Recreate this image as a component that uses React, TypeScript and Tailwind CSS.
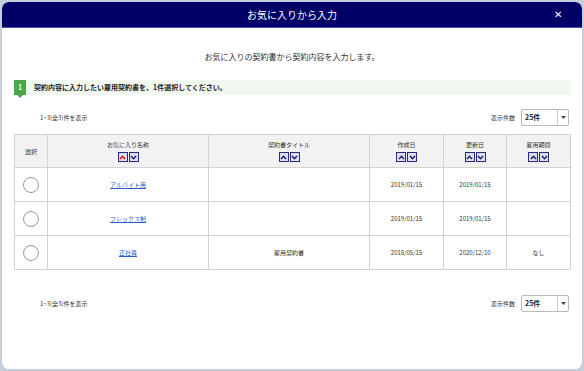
import React from "react";

const font = { fontFamily: '"Noto Sans CJK JP", "Noto Sans", sans-serif' };

function SortBtns({ upActive = false }: { upActive?: boolean }) {
  return (
    <div className="flex justify-center gap-[1px] mt-[3px]">
      <span className="w-[10px] h-[10px] border border-[#2a2a80] bg-[#dcdcf2] flex items-center justify-center">
        <svg width="7" height="5" viewBox="0 0 7 5">
          <path d="M1 4 L3.5 1.3 L6 4" fill="none" stroke={upActive ? "#e00000" : "#1a1a70"} strokeWidth="1.4" />
        </svg>
      </span>
      <span className="w-[10px] h-[10px] border border-[#2a2a80] bg-[#dcdcf2] flex items-center justify-center">
        <svg width="7" height="5" viewBox="0 0 7 5">
          <path d="M1 1 L3.5 3.7 L6 1" fill="none" stroke="#1a1a70" strokeWidth="1.4" />
        </svg>
      </span>
    </div>
  );
}

function Pager() {
  return (
    <div className="flex items-center justify-between">
      <div className="pl-[26px] text-[6px] text-[#333]">1~3(全3)件を表示</div>
      <div className="flex items-center gap-[6px] pr-[1px]">
        <span className="text-[6px] text-[#333]">表示件数</span>
        <div className="w-[48px] h-[17px] border border-[#bbb] rounded-[2px] bg-white flex">
          <div className="flex-1 flex items-center pl-[3px] text-[7px] text-[#222] font-bold">25件</div>
          <div className="w-[11px] border-l border-[#ccc] flex items-center justify-center">
            <svg width="5" height="3" viewBox="0 0 5 3"><path d="M0 0 L5 0 L2.5 3 Z" fill="#444" /></svg>
          </div>
        </div>
      </div>
    </div>
  );
}

const rows = [
  { name: "アルバイト用", title: "", created: "2019/01/15", updated: "2019/01/15", period: "" },
  { name: "フレックス制", title: "", created: "2019/01/15", updated: "2019/01/15", period: "" },
  { name: "正社員", title: "雇用契約書", created: "2018/05/15", updated: "2020/12/10", period: "なし" },
];

export default function App() {
  const th = "border border-[#d2d2d2] bg-[#f2f2f2] text-[6px] font-normal text-[#333] align-middle";
  const td = "border border-[#d2d2d2] text-[6px] text-[#333] text-center align-middle";
  return (
    <div className="w-[584px] h-[371px] bg-[#c6cedc] p-[2px]" style={font}>
      <div className="w-[580px] h-[367px] bg-white rounded-[7px] overflow-hidden flex flex-col">
        <div className="h-[26px] bg-[#000066] border-b border-[#4a4ab0] flex items-center justify-center relative shrink-0">
          <span className="text-white text-[10px]">お気に入りから入力</span>
          <span className="absolute right-[20px] top-[7px] text-white text-[10px] leading-none">✕</span>
        </div>
        <div className="flex-1 px-[12px]">
          <div className="text-center text-[8px] text-[#333] mt-[23px]">お気に入りの契約書から契約内容を入力します。</div>
          <div className="mt-[17px] h-[15px] bg-[#f1f8ef] flex items-center">
            <div className="relative w-[12px] h-[15px] bg-[#4aa84a] text-white text-[7px] font-bold flex items-center justify-center">
              1
              <span className="absolute left-[3px] bottom-[-3px] w-0 h-0 border-l-[3px] border-r-[3px] border-t-[3px] border-l-transparent border-r-transparent border-t-[#4aa84a]" />
            </div>
            <span className="ml-[8px] text-[7px] font-bold text-[#222]">契約内容に入力したい雇用契約書を、1件選択してください。</span>
          </div>
          <div className="mt-[14px]">
            <Pager />
          </div>
          <table className="mt-[8px] w-[556px] border-collapse table-fixed">
            <colgroup>
              <col className="w-[33px]" />
              <col className="w-[161px]" />
              <col className="w-[161px]" />
              <col className="w-[74px]" />
              <col className="w-[63px]" />
              <col className="w-[64px]" />
            </colgroup>
            <thead>
              <tr className="h-[33px]">
                <th className={th}>選択</th>
                <th className={th}>お気に入り名称<SortBtns upActive /></th>
                <th className={th}>契約書タイトル<SortBtns /></th>
                <th className={th}>作成日<SortBtns /></th>
                <th className={th}>更新日<SortBtns /></th>
                <th className={th}>雇用期間<SortBtns /></th>
              </tr>
            </thead>
            <tbody>
              {rows.map((r) => (
                <tr key={r.name} className="h-[34px]">
                  <td className={td}>
                    <span className="mx-auto block w-[16px] h-[16px] rounded-full border border-[#999] bg-white" />
                  </td>
                  <td className={td}>
                    <span className="text-[#2a5bd0] underline">{r.name}</span>
                  </td>
                  <td className={td}>{r.title}</td>
                  <td className={td}>{r.created}</td>
                  <td className={td}>{r.updated}</td>
                  <td className={td}>{r.period}</td>
                </tr>
              ))}
            </tbody>
          </table>
          <div className="mt-[25px]">
            <Pager />
          </div>
        </div>
      </div>
    </div>
  );
}
